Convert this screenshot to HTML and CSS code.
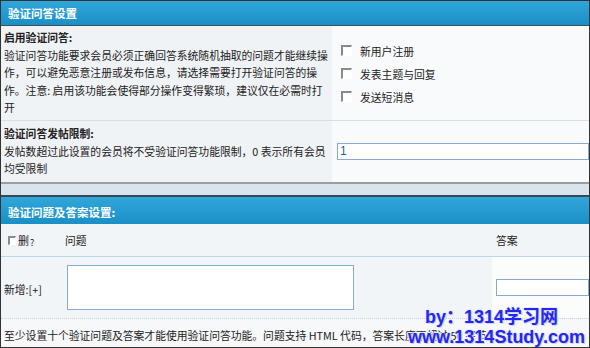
FILE: index.html
```html
<!DOCTYPE html>
<html lang="zh">
<head>
<meta charset="utf-8">
<title>验证问答设置</title>
<link rel="stylesheet" href="styles.css">
</head>
<body>
<div class="page">
  <div class="hd">验证问答设置</div>
  <div class="row row1">
    <div class="lcol">
      <div class="ttl">启用验证问答:</div>
      <div class="desc">验证问答功能要求会员必须正确回答系统随机抽取的问题才能继续操<br>作，可以避免恶意注册或发布信息，请选择需要打开验证问答的操<br>作。注意: 启用该功能会使得部分操作变得繁琐，建议仅在必需时打<br>开</div>
    </div>
    <div class="rcol">
      <label class="opt"><span class="cb"></span>新用户注册</label>
      <label class="opt"><span class="cb"></span>发表主题与回复</label>
      <label class="opt"><span class="cb"></span>发送短消息</label>
    </div>
  </div>
  <div class="row row2">
    <div class="lcol">
      <div class="ttl">验证问答发帖限制:</div>
      <div class="desc">发帖数超过此设置的会员将不受验证问答功能限制，0 表示所有会员<br>均受限制</div>
    </div>
    <div class="rcol rcol2">
      <div class="inp">1</div>
    </div>
  </div>
  <div class="band"></div>
  <div class="hd hd2">验证问题及答案设置:</div>
  <div class="qgrid qhead">
    <div class="c1"><span class="cb"></span><span class="del">删</span><span class="q">?</span></div>
    <div class="c2">问题</div>
    <div class="c3">答案</div>
  </div>
  <div class="qgrid qrow">
    <div class="c1">新增:[+]</div>
    <div class="c2"><div class="ta"></div></div>
    <div class="c3 ans"><div class="inp ainp"></div></div>
  </div>
  <div class="note">至少设置十个验证问题及答案才能使用验证问答功能。问题支持 HTML 代码，答案长度不超过 50 字节</div>
  <div class="wm">
    <div class="wm1">by：1314学习网</div>
    <div class="wm2">www.1314Study.com</div>
  </div>
</div>
</body>
</html>
```
FILE: styles.css
```css
* { box-sizing: border-box; }
body {
  margin: 0;
  font-family: "Noto Sans CJK SC", "Noto Sans", sans-serif;
  font-size: 10.8px;
  color: #222;
}
.page {
  position: relative;
  width: 590px;
  height: 348px;
  border: 1px solid #333;
  overflow: hidden;
  background: #f2f5f7;
}
.hd {
  height: 25px;
  background: linear-gradient(#30a7db, #1a8fc6);
  color: #fff;
  font-weight: bold;
  font-size: 11.5px;
  padding-left: 7px;
  display: flex;
  align-items: center;
  border-bottom: 1px solid #3e4f58;
}
.hd2 {
  height: 27px;
  border-bottom: 0;
  padding-top: 2px;
}
.row {
  display: flex;
  border-bottom: 1px solid #d3e0e8;
}
.row1 { height: 95px; }
.row2 { height: 63px; border-bottom: 2px solid #9b9f9c; }
.lcol {
  width: 331px;
  padding: 3px 0 0 3px;
  line-height: 17.5px;
  background: #f0f3f5;
  white-space: nowrap;
}
.row2 .lcol { padding-top: 4px; }
.ttl { font-weight: bold; }
.rcol {
  flex: 1;
  background: #f9fafb;
  padding: 13px 0 0 9px;
}
.opt {
  display: flex;
  align-items: center;
  height: 23px;
}
.cb {
  display: inline-block;
  width: 11px;
  height: 11px;
  border-top: 2px solid #8a8a8a;
  border-left: 2px solid #8a8a8a;
  border-right: 1px solid #fff;
  border-bottom: 1px solid #fff;
  background: #fff;
  margin-right: 8px;
}
.rcol2 {
  display: flex;
  align-items: center;
  padding: 0 0 0 5px;
}
.inp {
  width: 100%;
  height: 17px;
  border: 1px solid #86acd3;
  background: #fff;
  color: #1f5f9e;
  font-family: "Liberation Sans", sans-serif;
  font-size: 12px;
  line-height: 15px;
  padding-left: 2px;
}
.band {
  height: 13px;
  background: #dae4ec;
  border-bottom: 2px solid #3a4850;
}
.qgrid {
  display: grid;
  grid-template-columns: 62px 429px 1fr;
}
.qhead {
  height: 33px;
  border-bottom: 1px solid #bcd6e6;
  align-items: center;
}
.qhead .c1 {
  display: flex;
  align-items: center;
  padding-left: 7px;
}
.qhead .cb { width: 8px; height: 9px; margin-right: 2px; }
.del { font-size: 11px; }
.q { font-size: 9px; margin-top: 4px; margin-left: 1px; }
.qhead .c2 { padding-left: 2px; }
.qhead .c3 { padding-left: 4px; }
.qrow {
  height: 62px;
  border-bottom: 1px dotted #c3d5e0;
  align-items: stretch;
}
.qrow .c1 {
  display: flex;
  align-items: center;
  padding-left: 3px;
  padding-top: 2px;
}
.qrow .c2 {
  display: flex;
  align-items: center;
  padding-left: 4px;
}
.ta {
  width: 287px;
  height: 45px;
  border: 1px solid #86acd3;
  background: #fff;
}
.ans {
  background: #fbfcfc;
  display: flex;
  align-items: center;
  padding-left: 4px;
}
.ainp { height: 17px; }
.note {
  height: 28px;
  padding: 4px 0 0 3px;
  display: flex;
  align-items: center;
  background: #f7f8f9;
  white-space: nowrap;
}
.wm {
  position: absolute;
  left: 407px;
  top: 306px;
  font-family: "Liberation Sans", "Noto Sans CJK SC", sans-serif;
  font-weight: bold;
  font-size: 18px;
  line-height: 20px;
  color: #2626ee;
  text-shadow: 1px 1px 0 #c9d4ff, -1px 0 0 #e6ecff, 0 -1px 0 #e6ecff, 0 0 2px #fff;
  white-space: nowrap;
}
.wm1 { padding-left: 17px; }
```
